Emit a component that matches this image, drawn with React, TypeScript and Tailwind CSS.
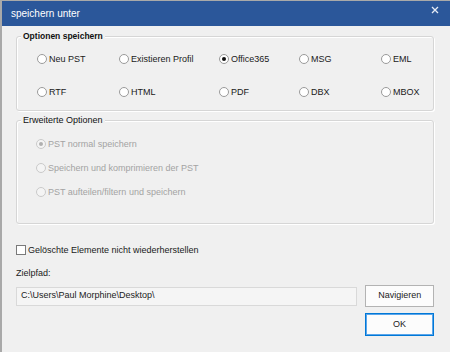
import React from 'react';

// Radio-Knopf im Windows-Stil
function Radio({ label, checked = false, disabled = false }: { label: string; checked?: boolean; disabled?: boolean }) {
  return (
    <div className="flex items-center h-[14px] gap-[2px]">
      <span
        className={`w-[10px] h-[10px] rounded-full border flex items-center justify-center shrink-0 ${
          disabled ? 'border-[#cacaca] bg-[#f4f4f4]' : 'border-[#9a9a9a] bg-white'
        }`}
      >
        {checked && <span className={`w-[4px] h-[4px] rounded-full ${disabled ? 'bg-[#b0b0b0]' : 'bg-[#111]'}`} />}
      </span>
      <span className={`text-[9px] leading-none whitespace-nowrap ${disabled ? 'text-[#a3a3a3]' : 'text-[#1a1a1a]'}`}>{label}</span>
    </div>
  );
}

function GroupBox({ title, bold = false, className = '', children }: { title: string; bold?: boolean; className?: string; children: React.ReactNode }) {
  return (
    <div className={`relative border border-[#d6d6d6] rounded-[3px] shadow-[inset_1px_1px_0_#fff,1px_1px_0_#fff] ${className}`}>
      <span
        className={`absolute -top-[7px] left-[4px] px-[2px] bg-[#f0f0f0] leading-[12px] text-[#111] ${
          bold ? 'text-[8.5px] font-bold' : 'text-[9px]'
        }`}
      >
        {title}
      </span>
      {children}
    </div>
  );
}

export default function App() {
  return (
    <div className="w-[450px] h-[352px] overflow-hidden bg-[#a9a9a9] pt-px pl-[2px] font-['Liberation_Sans',Arial,sans-serif]">
      <div className="h-full bg-[#f0f0f0] flex flex-col">
        {/* Titelleiste */}
        <div className="relative h-[25px] bg-[#2b579a] shrink-0 flex items-center pl-[9px]">
          <span className="text-white text-[10px] leading-none mt-[1px]">speichern unter</span>
          <svg className="absolute right-[11px] top-[5px]" width="8" height="8" viewBox="0 0 8 8">
            <path d="M1 1 L7 7 M7 1 L1 7" stroke="#e6ecf5" strokeWidth="1.3" />
          </svg>
        </div>

        <div className="flex flex-col pl-[14px] pr-[16px]">
          {/* Optionen speichern */}
          <GroupBox title="Optionen speichern" bold className="mt-[10px] h-[75px]">
            <div className="grid grid-cols-[82px_100px_80px_82px_1fr] gap-y-[19px] pt-[15px] pl-[20px]">
              <Radio label="Neu PST" />
              <Radio label="Existieren Profil" />
              <Radio label="Office365" checked />
              <Radio label="MSG" />
              <Radio label="EML" />
              <Radio label="RTF" />
              <Radio label="HTML" />
              <Radio label="PDF" />
              <Radio label="DBX" />
              <Radio label="MBOX" />
            </div>
          </GroupBox>

          {/* Erweiterte Optionen */}
          <GroupBox title="Erweiterte Optionen" className="mt-[9px] h-[104px]">
            <div className="flex flex-col gap-[10px] pt-[16px] pl-[19px]">
              <Radio label="PST normal speichern" checked disabled />
              <Radio label="Speichern und komprimieren der PST" disabled />
              <Radio label="PST aufteilen/filtern und speichern" disabled />
            </div>
          </GroupBox>

          {/* Checkbox */}
          <div className="mt-[19px] flex items-center h-[14px] gap-[2px]">
            <span className="w-[10px] h-[10px] border border-[#7a7a7a] bg-white shrink-0" />
            <span className="text-[9px] leading-none text-[#1a1a1a]">Gelöschte Elemente nicht wiederherstellen</span>
          </div>

          <div className="mt-[9px] h-[14px] flex items-center text-[9px] leading-none text-[#1a1a1a]">Zielpfad:</div>

          <div className="mt-[5px] flex items-center gap-[8px] h-[22px]">
            <div className="w-[343px] h-[19px] border border-[#d9d9d9] bg-[#f5f5f5] flex items-center pl-[4px] text-[9px] text-[#222]">
              C:\Users\Paul Morphine\Desktop\
            </div>
            <button className="w-[69px] h-[22px] border border-[#b3b3b3] bg-[#fcfcfc] text-[9px] text-[#222]">Navigieren</button>
          </div>

          <button className="mt-[6px] self-end w-[69px] h-[23px] border border-[#0078d7] shadow-[inset_0_0_0_1px_#5aa5ea] bg-[#fcfcfc] text-[9px] text-[#222]">
            OK
          </button>
        </div>
      </div>
    </div>
  );
}
